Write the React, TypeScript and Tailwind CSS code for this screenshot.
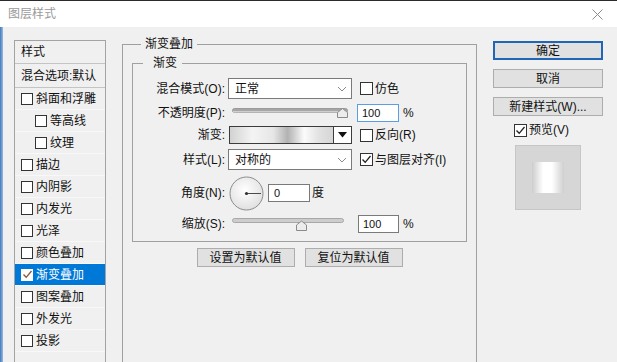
import React from 'react'

const Check = ({ color = '#222' }: { color?: string }) => (
    <svg width="11" height="11" viewBox="0 0 11 11">
        <polyline points="1.5,5.5 4.2,8.3 9.5,2" fill="none" stroke={color} strokeWidth="1.3" />
    </svg>
)

const Box = ({ checked = false, size = 13 }: { checked?: boolean; size?: number }) => (
    <span
        className={`flex items-center justify-center bg-white border border-[#333] shrink-0 ${size === 13 ? 'w-[13px] h-[13px]' : 'w-[12px] h-[12px]'}`}
    >
        {checked && <Check />}
    </span>
)

const Chevron = () => (
    <svg width="10" height="6" viewBox="0 0 10 6">
        <polyline points="1,1 5,5 9,1" fill="none" stroke="#8a8a8a" strokeWidth="1" />
    </svg>
)

const styleItems = [
    { name: '斜面和浮雕', indent: false },
    { name: '等高线', indent: true },
    { name: '纹理', indent: true },
    { name: '描边', indent: false },
    { name: '内阴影', indent: false },
    { name: '内发光', indent: false },
    { name: '光泽', indent: false },
    { name: '颜色叠加', indent: false },
    { name: '渐变叠加', indent: false, active: true },
    { name: '图案叠加', indent: false },
    { name: '外发光', indent: false },
    { name: '投影', indent: false },
]

function StyleList() {
    return (
        <div className="mt-[13px] w-[92px] h-[340px] border border-[#a3a3a3] self-start shrink-0 overflow-hidden">
            <div className="h-[23px] border-b border-[#c4c4c4] pl-[6px] flex items-center">样式</div>
            <div className="h-[24px] border-b border-[#c4c4c4] pl-[6px] flex items-center whitespace-nowrap overflow-hidden">混合选项:默认</div>
            {styleItems.map(item => (
                <div
                    key={item.name}
                    className={`h-[22px] flex items-center gap-[3px] border-b border-[#f8f8f8] ${item.indent ? 'pl-[20px]' : 'pl-[6px]'} ${item.active ? 'bg-[#0078d7] text-white' : ''}`}
                >
                    {item.active ? (
                        <span className="w-[12px] h-[12px] bg-white flex items-center justify-center shrink-0">
                            <Check color="#8a5634" />
                        </span>
                    ) : (
                        <Box size={12} />
                    )}
                    <span className="whitespace-nowrap">{item.name}</span>
                </div>
            ))}
        </div>
    )
}

const Label = ({ children }: { children: React.ReactNode }) => (
    <span className="w-[92px] text-right whitespace-nowrap shrink-0">{children}</span>
)

function Select({ value }: { value: string }) {
    return (
        <div className="ml-[3px] w-[124px] h-[21px] bg-white border border-[#7a7a7a] flex items-center justify-between pl-[6px] pr-[4px]">
            <span>{value}</span>
            <Chevron />
        </div>
    )
}

function GradientOverlay() {
    return (
        <fieldset className="mt-[9px] ml-[16px] w-[355px] h-[340px] border border-[#a0a0a0] shrink-0">
            <legend className="ml-[18px] px-[4px] leading-[16px]">渐变叠加</legend>

            <fieldset className="mt-[3px] mx-[9px] border border-[#a0a0a0] pb-[8px]">
                <legend className="ml-[10px] pl-[10px] pr-[5px] leading-[16px]">渐变</legend>

                <div className="mt-[7px] h-[21px] flex items-center">
                    <Label>混合模式(O):</Label>
                    <Select value="正常" />
                    <span className="ml-[8px]"><Box /></span>
                    <span className="ml-[2px]">仿色</span>
                </div>

                <div className="mt-[5px] h-[18px] flex items-center">
                    <Label>不透明度(P):</Label>
                    <svg className="ml-[7px] shrink-0" width="118" height="18" viewBox="0 0 118 18">
                        <rect x="0.5" y="4.5" width="115" height="4" rx="2" fill="#a6a6a6" stroke="#9a9a9a" />
                        <rect x="1" y="7" width="114" height="1.5" fill="#cfcfcf" />
                        <polygon points="105.5,13.5 105.5,8.5 110.5,4.5 115.5,8.5 115.5,13.5" fill="#ececec" stroke="#8a8a8a" />
                    </svg>
                    <div className="ml-[7px] w-[42px] h-[18px] bg-white border border-[#5a9ee6] flex items-center pl-[4px] text-[11px]">100</div>
                    <span className="ml-[4px]">%</span>
                </div>

                <div className="mt-[4px] h-[18px] flex items-center">
                    <Label>渐变:</Label>
                    <div className="ml-[4px] w-[123px] h-[18px] border border-[#3c3c3c] flex">
                        <div className="flex-1 bg-[linear-gradient(to_right,#d2d2d2_0%,#f4f4f4_22%,#e6e6e6_42%,#b2b2b2_56%,#fbfbfb_72%,#e2e2e2_86%,#d6d6d6_100%)]" />
                        <div className="w-[18px] border-l border-[#3c3c3c] bg-white flex items-center justify-center">
                            <svg width="9" height="6" viewBox="0 0 9 6">
                                <polygon points="0,0 9,0 4.5,5.5" fill="#111" />
                            </svg>
                        </div>
                    </div>
                    <span className="ml-[8px]"><Box /></span>
                    <span className="ml-[2px]">反向(R)</span>
                </div>

                <div className="mt-[5px] h-[21px] flex items-center">
                    <Label>样式(L):</Label>
                    <Select value="对称的" />
                    <span className="ml-[8px]"><Box checked /></span>
                    <span className="ml-[2px]">与图层对齐(I)</span>
                </div>

                <div className="mt-[6px] h-[34px] flex items-center">
                    <Label>角度(N):</Label>
                    <svg className="ml-[4px] shrink-0" width="35" height="35" viewBox="0 0 35 35">
                        <defs>
                            <radialGradient id="dial" cx="45%" cy="40%" r="65%">
                                <stop offset="0%" stopColor="#ffffff" />
                                <stop offset="100%" stopColor="#dedede" />
                            </radialGradient>
                        </defs>
                        <circle cx="17.5" cy="17.5" r="16.5" fill="url(#dial)" stroke="#8c8c8c" />
                        <line x1="17.5" y1="17.5" x2="32" y2="17.5" stroke="#4a4a4a" strokeWidth="1" />
                        <circle cx="17.5" cy="17.5" r="1.6" fill="#333" />
                    </svg>
                    <div className="ml-[4px] w-[42px] h-[18px] bg-white border border-[#7a7a7a] flex items-center pl-[5px] text-[11px]">0</div>
                    <span className="ml-[2px]">度</span>
                </div>

                <div className="mt-[5px] h-[18px] flex items-center">
                    <Label>缩放(S):</Label>
                    <svg className="ml-[7px] shrink-0" width="113" height="18" viewBox="0 0 113 18">
                        <rect x="0.5" y="3.5" width="111" height="4" rx="2" fill="#cdcdcd" stroke="#a8a8a8" />
                        <polygon points="64.5,15.5 64.5,10 69.5,6 74.5,10 74.5,15.5" fill="#ececec" stroke="#8a8a8a" />
                    </svg>
                    <div className="ml-[13px] w-[41px] h-[18px] bg-white border border-[#7a7a7a] flex items-center pl-[4px] text-[11px]">100</div>
                    <span className="ml-[4px]">%</span>
                </div>
            </fieldset>

            <div className="mt-[6px] flex justify-center gap-[10px]">
                <button className="w-[98px] h-[19px] bg-[#e1e1e1] border border-[#adadad] leading-none">设置为默认值</button>
                <button className="w-[98px] h-[19px] bg-[#e1e1e1] border border-[#adadad] leading-none">复位为默认值</button>
            </div>
        </fieldset>
    )
}

function Actions() {
    return (
        <div className="mt-[14px] ml-[16px] w-[110px] flex flex-col shrink-0">
            <button className="h-[19px] bg-[#e1e1e1] border-2 border-[#2165b6] leading-none">确定</button>
            <button className="mt-[9px] h-[19px] bg-[#e1e1e1] border border-[#adadad] leading-none">取消</button>
            <button className="mt-[9px] h-[19px] bg-[#e1e1e1] border border-[#adadad] leading-none whitespace-nowrap">新建样式(W)...</button>
            <div className="mt-[7px] h-[14px] pl-[21px] flex items-center gap-[2px]">
                <Box checked />
                <span>预览(V)</span>
            </div>
            <div className="mt-[8px] ml-[22px] w-[66px] h-[65px] bg-[#d6d6d6] border border-[#c6c6c6] flex items-center justify-center">
                <div className="w-[32px] h-[31px] bg-[linear-gradient(to_right,#cdcdcd,#ffffff_35%,#ffffff_62%,#cfcfcf)]" />
            </div>
        </div>
    )
}

export default function App() {
    return (
        <div className="w-[617px] h-[362px] overflow-hidden bg-[#f0f0f0] flex flex-col text-[12px] text-[#111] font-['Liberation_Sans','Noto_Sans_CJK_SC',sans-serif]">
            <div className="h-[27px] shrink-0 bg-white border-t border-[#2b2b2b] flex items-center justify-between pl-[8px] pr-[14px]">
                <span className="text-[#9a9a9a]">图层样式</span>
                <svg width="11" height="11" viewBox="0 0 11 11">
                    <path d="M0.5 0.5 L10.5 10.5 M10.5 0.5 L0.5 10.5" stroke="#8a8a8a" strokeWidth="1" />
                </svg>
            </div>
            <div className="flex-1 min-h-0 flex overflow-hidden">
                <div className="w-[3px] shrink-0 bg-[linear-gradient(to_right,#3f78bf,#9cbbe0)]" />
                <div className="ml-[11px] flex items-start">
                    <StyleList />
                    <GradientOverlay />
                    <Actions />
                </div>
            </div>
        </div>
    )
}
